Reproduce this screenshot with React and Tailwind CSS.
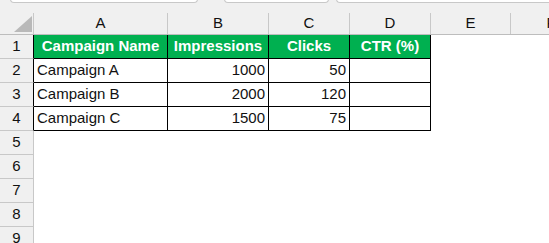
const cols = [
  { key: "A", w: "w-[134px]" },
  { key: "B", w: "w-[101px]" },
  { key: "C", w: "w-[81px]" },
  { key: "D", w: "w-[81px]" },
  { key: "E", w: "w-[80px]" },
];

const data = [
  ["Campaign A", "1000", "50", ""],
  ["Campaign B", "2000", "120", ""],
  ["Campaign C", "1500", "75", ""],
];

const headers = ["Campaign Name", "Impressions", "Clicks", "CTR (%)"];

function RowHead({ n, dark }) {
  return (
    <div
      className={`w-[34px] shrink-0 h-full flex items-center justify-center bg-[#f0f0f0] border-r border-b border-b-[#c8c8c8] ${
        dark ? "border-r-black" : "border-r-[#c8c8c8]"
      }`}
    >
      {n}
    </div>
  );
}

export default function App() {
  return (
    <div
      className="w-[549px] h-[243px] overflow-hidden bg-white text-[15px] text-[#111]"
      style={{ fontFamily: '"Liberation Sans", Arial, sans-serif' }}
    >
      {/* toolbar edge */}
      <div className="h-[13px] bg-[#f0f0f0] flex items-start">
        <div className="ml-[10px] w-[188px] h-[4px] -mt-px bg-white border border-[#c8c8c8] rounded-b-[5px]" />
        <div className="ml-[26px] w-[105px] h-[4px] -mt-px bg-white border border-[#c8c8c8] rounded-b-[5px]" />
        <div className="ml-[7px] flex-1 h-[4px] -mt-px bg-white border border-r-0 border-[#c8c8c8] rounded-bl-[5px]" />
      </div>

      {/* column headers */}
      <div className="h-[22px] flex bg-[#f0f0f0] border-b border-[#bdbdbd] overflow-hidden">
        <div className="w-[34px] shrink-0 border-r border-[#c8c8c8] flex items-end justify-end pb-[2px]">
          <svg width="19" height="16" viewBox="0 0 19 16">
            <polygon points="18,0 18,16 0,16" fill="#b9b9b9" />
          </svg>
        </div>
        {cols.map((c) => (
          <div
            key={c.key}
            className={`${c.w} shrink-0 border-r border-[#c8c8c8] flex items-center justify-center`}
          >
            {c.key}
          </div>
        ))}
        <div className="w-[80px] shrink-0 flex items-center justify-center">F</div>
      </div>

      {/* row 1 - headers */}
      <div className="h-[24px] flex">
        <RowHead n={1} dark />
        {headers.map((h, i) => (
          <div
            key={h}
            className={`${cols[i].w} shrink-0 h-full bg-[#00b050] text-white font-bold border-r border-b border-black flex items-center justify-center`}
          >
            {h}
          </div>
        ))}
      </div>

      {data.map((r, ri) => (
        <div key={ri} className="h-[24px] flex">
          <RowHead n={ri + 2} dark />
          {r.map((v, i) => (
            <div
              key={i}
              className={`${cols[i].w} shrink-0 h-full border-r border-b border-black flex items-center ${
                i === 0 ? "justify-start pl-[3px]" : "justify-end pr-[3px]"
              }`}
            >
              {v}
            </div>
          ))}
        </div>
      ))}

      {[5, 6, 7, 8, 9].map((n) => (
        <div key={n} className="h-[24px] flex">
          <RowHead n={n} />
        </div>
      ))}
    </div>
  );
}
